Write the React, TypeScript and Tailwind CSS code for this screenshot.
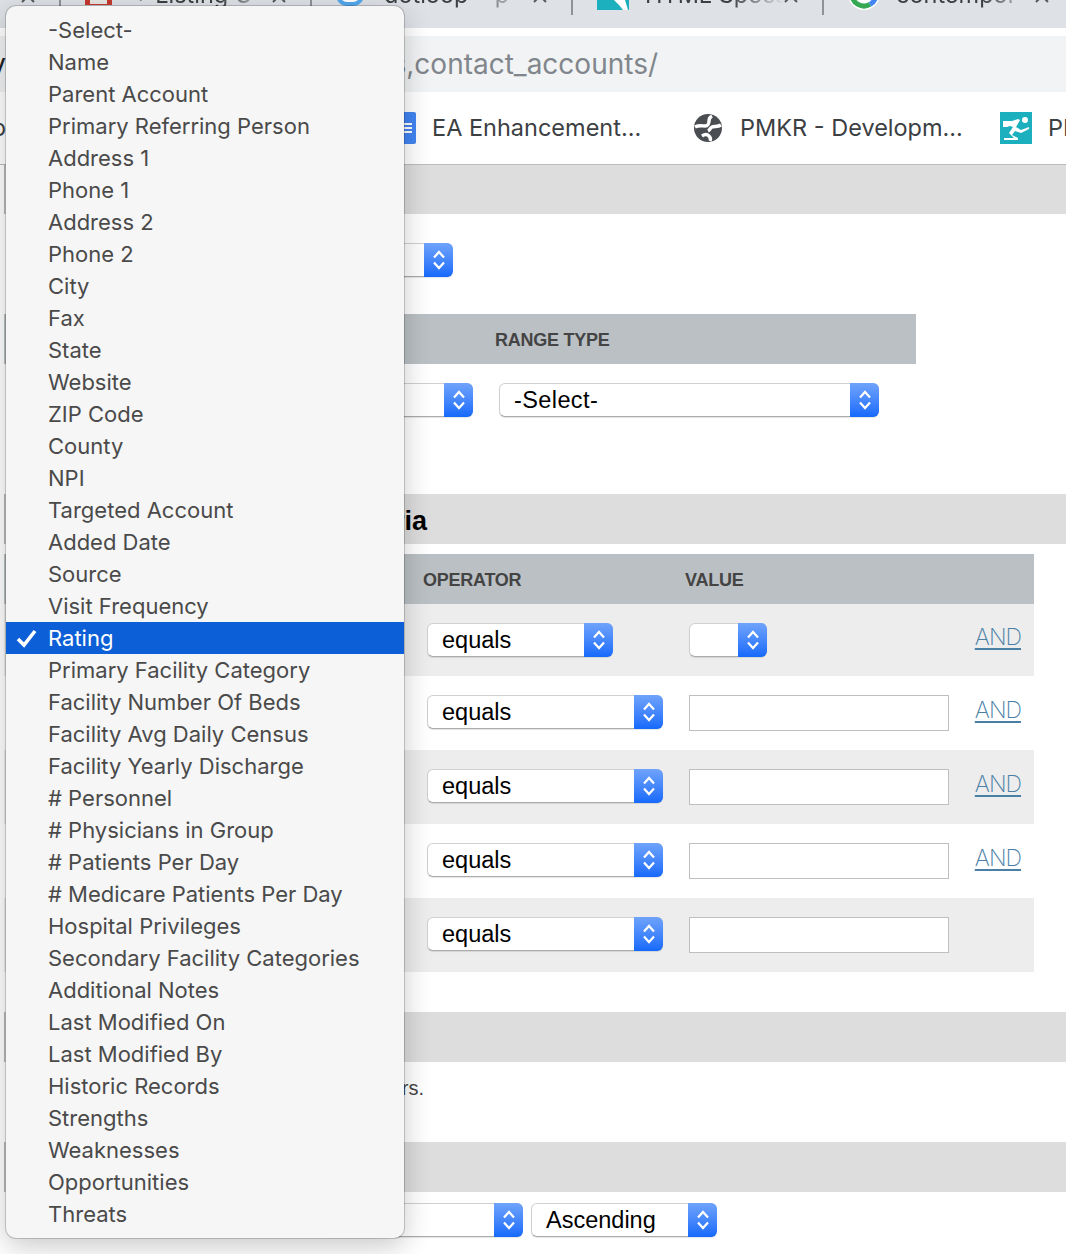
const SANS = "font-['Liberation_Sans',Arial,sans-serif]";

const options = [
  '-Select-', 'Name', 'Parent Account', 'Primary Referring Person', 'Address 1', 'Phone 1', 'Address 2', 'Phone 2',
  'City', 'Fax', 'State', 'Website', 'ZIP Code', 'County', 'NPI', 'Targeted Account', 'Added Date', 'Source',
  'Visit Frequency', 'Rating', 'Primary Facility Category', 'Facility Number Of Beds', 'Facility Avg Daily Census',
  'Facility Yearly Discharge', '# Personnel', '# Physicians in Group', '# Patients Per Day',
  '# Medicare Patients Per Day', 'Hospital Privileges', 'Secondary Facility Categories', 'Additional Notes',
  'Last Modified On', 'Last Modified By', 'Historic Records', 'Strengths', 'Weaknesses', 'Opportunities', 'Threats',
];

function Select({ label, className, labelClass = '' }: { label?: string; className: string; labelClass?: string }) {
  return (
    <div className={`flex h-[34px] shrink-0 rounded-[6px] bg-white border border-[#d0d0d0] border-b-[#ababab] shadow-[0_1px_1px_rgba(0,0,0,0.1)] ${className}`}>
      <div className={`flex-1 pl-[14px] text-[23.5px] leading-[33px] text-black ${SANS} ${labelClass}`}>{label}</div>
      <div className="w-[29px] -my-px -mr-px rounded-r-[6px] flex items-center justify-center bg-gradient-to-b from-[#6fa3fb] to-[#1469fb]">
        <svg width="14" height="24" viewBox="0 0 14 24" fill="none" stroke="white" strokeWidth="2.2">
          <path d="M2 9.5 7 4l5 5.5" />
          <path d="M2 14.5 7 20l5-5.5" />
        </svg>
      </div>
    </div>
  );
}

function SectionBar({ children, height = 'h-[50px]' }: { children?: React.ReactNode; height?: string }) {
  return <div className={`ml-1 bg-[#dddddd] border-l border-[#b5b5b5] ${height}`}>{children}</div>;
}

function Tab({ icon, text, width = 'w-[251px]' }: { icon?: React.ReactNode; text?: string; width?: string }) {
  return (
    <div className={`${width} h-[15px] shrink-0 border-r-2 border-[#8f9296] overflow-hidden flex items-start`}>
      {icon && <div className="w-[24px] shrink-0" />}
      {icon && <div className="w-[28px] shrink-0 -mt-[16px]">{icon}</div>}
      {text && (
        <div className="ml-[20px] w-[140px] -mt-[20px] text-[23.5px] leading-[30px] text-[#3c4043] whitespace-pre overflow-hidden font-['Inter',sans-serif] [mask-image:linear-gradient(to_right,black_62%,transparent)]">
          {text}
        </div>
      )}
      <div className="ml-auto mr-[24px] -mt-[11px] text-[#55585c]">
        <svg width="14" height="14" viewBox="0 0 14 14" stroke="currentColor" strokeWidth="2"><path d="M1 1l12 12M13 1 1 13" /></svg>
      </div>
    </div>
  );
}

function AndLink() {
  return (
    <span className="text-[23px] leading-[30px] font-extralight text-[#4a80a5] underline decoration-2 underline-offset-[3px] font-['Inter',sans-serif] tracking-[-1px]">AND</span>
  );
}

const rows = [
  { bg: 'bg-[#ededed]', h: 'h-[72px]', sel: 'w-[186px]', value: 'select', and: true },
  { bg: 'bg-white', h: 'h-[74px]', sel: 'w-[236px] -mt-[2px]', value: 'input', and: true },
  { bg: 'bg-[#ededed]', h: 'h-[74px]', sel: 'w-[236px] -mt-[2px]', value: 'input', and: true },
  { bg: 'bg-white', h: 'h-[74px]', sel: 'w-[236px] -mt-[2px]', value: 'input', and: true },
  { bg: 'bg-[#ededed]', h: 'h-[74px]', sel: 'w-[236px] -mt-[2px]', value: 'input', and: false },
];

export default function App() {
  return (
    <div className="relative w-[1066px] h-[1254px] overflow-hidden bg-white">
      {/* Browser chrome */}
      <div className="h-7 bg-[#dee1e6] flex overflow-hidden">
        <Tab width="w-[61px]" />
        <Tab
          text="+ Listing C"
          icon={<div className="h-[21px] w-[27px] border-x-[5px] border-b-[1px] border-[#c5392f] bg-[#e9e6e3]" />}
        />
        <Tab
          width="w-[261px]"
          text="dotloop    p"
          icon={<div className="h-[22px] w-[28px] rounded-full border-[4px] border-[#53a8ee] bg-white" />}
        />
        <Tab
          text="HTML Specs"
          icon={
            <svg width="32" height="26" viewBox="0 0 32 26">
              <rect width="32" height="26" fill="#1cb0bf" />
              <path d="M17 16h11l3 10h-5l-4-5z" fill="white" />
            </svg>
          }
        />
        <Tab
          text="contempor"
          icon={
            <svg width="32" height="26" viewBox="0 0 32 26">
              <circle cx="16" cy="10" r="16" fill="white" />
              <path d="M4 10a12 12 0 0 0 18 10.4" fill="none" stroke="#34a853" strokeWidth="5" />
              <path d="M22 20.4A12 12 0 0 0 28 10" fill="none" stroke="#4285f4" strokeWidth="5" />
            </svg>
          }
        />
      </div>
      <div className="h-2" />
      <div className="h-14 bg-[#f1f3f4] flex whitespace-nowrap overflow-hidden text-[28px] leading-[56px] font-['Inter',sans-serif]">
        <div className="w-[6px] shrink-0 overflow-hidden flex justify-end text-[#202124]">v</div>
        <div className="w-[652px] shrink-0 text-right text-[#80868b]">s,contact_accounts/</div>
      </div>
      <div className="h-[73px] bg-white border-b border-[#bdbdbd] flex items-center whitespace-nowrap overflow-hidden text-[23.5px] text-[#3c4043] font-['Inter',sans-serif]">
        <div className="w-[6px] shrink-0 overflow-hidden flex justify-end">o</div>
        <div className="ml-[378px] w-[32px] h-[32px] shrink-0 rounded-[2px] bg-[#4285f4] flex flex-col items-end justify-center gap-[2px] pr-[4px]">
          <div className="w-[8px] h-[2px] bg-white" />
          <div className="w-[8px] h-[2px] bg-white" />
          <div className="w-[8px] h-[2px] bg-white" />
        </div>
        <div className="ml-4 w-[262px] shrink-0">EA Enhancement...</div>
        <svg className="shrink-0" width="28" height="28" viewBox="0 0 28 28">
          <circle cx="14" cy="14" r="14" fill="#4a4d52" />
          <path d="M1 13c4-2 7-1 10-1 3 0 4-3 4-5 0-2 1-4 3-5" fill="none" stroke="white" strokeWidth="3.4" />
          <path d="M27 11c-3 2-7 1-9 2-2 1-2 3-4 4" fill="none" stroke="white" strokeWidth="3.4" />
          <path d="M8 22c3-2 5-2 7 0 1 1 2 3 1 5" fill="none" stroke="white" strokeWidth="3.4" />
        </svg>
        <div className="ml-[18px] w-[260px] shrink-0">PMKR - Developm...</div>
        <svg className="shrink-0" width="32" height="32" viewBox="0 0 32 32">
          <rect width="32" height="32" fill="#1cb0bf" />
          <circle cx="25" cy="8" r="3" fill="white" />
          <path d="M3 9h9l6-2 2 1-4 7 5 3 8-3v2l-8 4-6-2-3 4 6 3v2H4v-2h10l-5-5 4-6-3-1-3 1H3z" fill="white" />
        </svg>
        <div className="ml-4">PI</div>
      </div>

      {/* Page content behind the open menu */}
      <SectionBar height="h-[49px]" />
      <div className="h-[100px] flex items-start pt-[29px]">
        <Select className="ml-[253px] w-[200px]" />
      </div>
      <div className="ml-1 w-[912px] h-[50px] bg-[#bbc0c4] flex items-center pl-[491px] pt-[2px]">
        <span className={`text-[18px] font-bold text-[#444] tracking-[-0.25px] ${SANS}`}>RANGE TYPE</span>
      </div>
      <div className="h-[130px] flex items-start pt-[19px]">
        <Select className="ml-[273px] w-[200px]" />
        <Select className="ml-[26px] w-[380px]" label="-Select-" labelClass="tracking-[0.4px]" />
      </div>
      <SectionBar>
        <div className={`w-[422px] text-right text-[27px] leading-[54px] font-bold text-black whitespace-nowrap ${SANS}`}>Search Criteria</div>
      </SectionBar>
      <div className="h-[10px]" />
      <div className="ml-1 w-[1030px] h-[50px] bg-[#bbc0c4] flex items-center pl-[419px] pt-[2px]">
        <span className={`w-[262px] text-[18px] font-bold text-[#444] tracking-[-0.25px] ${SANS}`}>OPERATOR</span>
        <span className={`text-[18px] font-bold text-[#444] tracking-[-0.25px] ${SANS}`}>VALUE</span>
      </div>
      <div className="ml-1 w-[1030px]">
        {rows.map((r, i) => (
          <div key={i} className={`flex items-center pl-[423px] pr-[13px] ${r.bg} ${r.h}`}>
            <div className="w-[262px]">
              <Select className={r.sel} label="equals" />
            </div>
            {r.value === 'select' ? (
              <Select className="w-[78px]" />
            ) : (
              <div className="w-[260px] h-[36px] bg-white border border-[#bfbfbf]" />
            )}
            <div className="ml-auto -mt-[6px]">{r.and && <AndLink />}</div>
          </div>
        ))}
      </div>
      <div className="h-10" />
      <SectionBar />
      <div className={`h-[80px] w-[424px] pt-[12px] text-right text-[20px] leading-[28px] text-[#444] whitespace-nowrap ${SANS}`}>
        Only active users.
      </div>
      <SectionBar />
      <div className="flex pt-[11px]">
        <Select className="ml-[323px] w-[200px]" />
        <Select className="ml-2 w-[186px]" label="Ascending" />
      </div>

      {/* Open select menu */}
      <div className="absolute left-[6px] top-[6px] w-[398px] h-[1232px] py-2 rounded-[10px] bg-[#f6f6f6] shadow-[0_0_0_1px_rgba(0,0,0,0.18),0_8px_28px_rgba(0,0,0,0.22)]">
        {options.map(o => {
          const active = o === 'Rating';
          return (
            <div
              key={o}
              className={`relative h-8 pl-[42px] text-[22px] leading-8 whitespace-nowrap font-['Inter',sans-serif] ${active ? 'bg-[#0c5fd6] text-white' : 'text-[#4a4a4a]'}`}
            >
              {active && (
                <svg className="absolute left-[10px] top-[7px]" width="22" height="19" viewBox="0 0 22 19" fill="none" stroke="white" strokeWidth="3.6">
                  <path d="M2 10l6 6L19 2" />
                </svg>
              )}
              {o}
            </div>
          );
        })}
      </div>
    </div>
  );
}
